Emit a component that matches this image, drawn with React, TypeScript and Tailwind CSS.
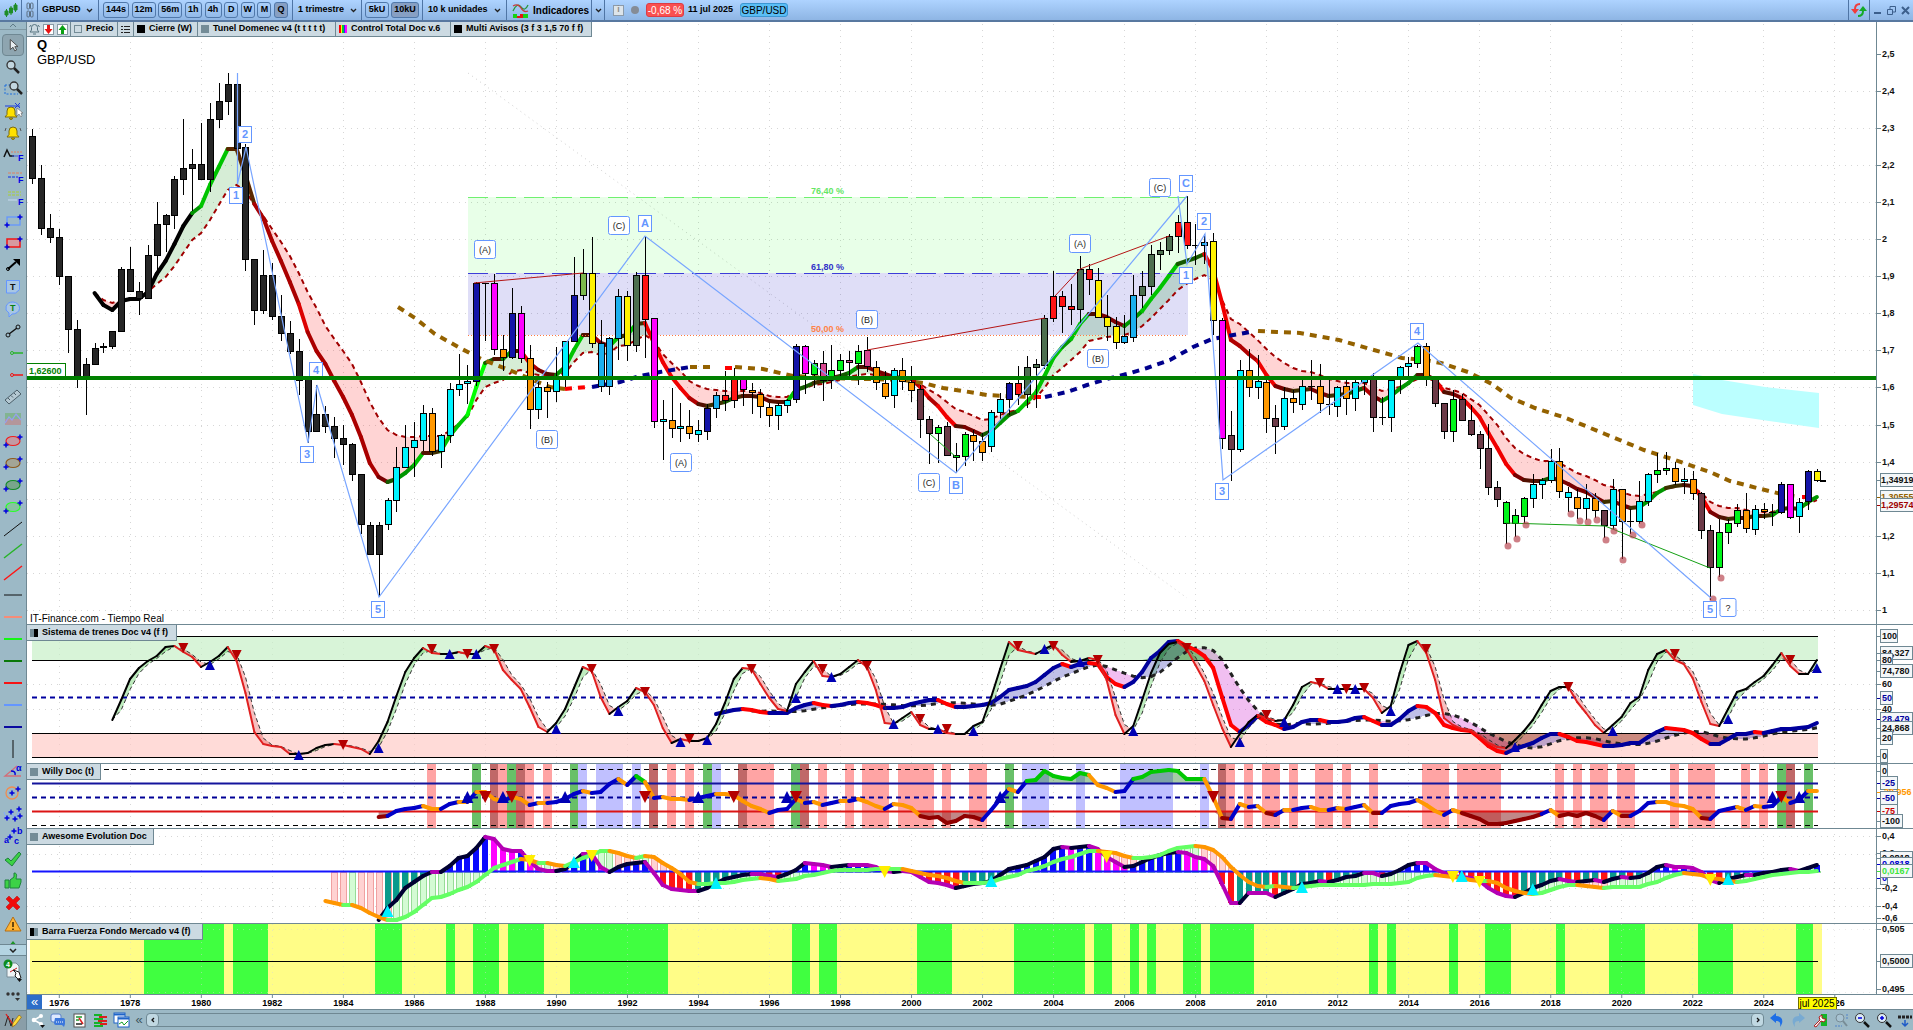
import React from "react";

type Tick = { y: number; text: string; color?: string; boxed?: boolean };
type Candle = [string, number, number, number, number];

const STEP = 8.878;
const barX = (i: number) => 32.4 + STEP * i;

const candleFill: Record<string, string> = {
  K: "#262626",
  C: "#00f4ff",
  O: "#ff9800",
  N: "#1414a8",
  M: "#ff00ff",
  G: "#00f51a",
  L: "#7db84c",
  D: "#4d6f50",
  R: "#ff1414",
  Y: "#fff200",
  B: "#1cb0ee",
  W: "#6c3a47",
  P: "#d8468f",
  X: "#000000",
};

// color, body top, body bottom, high, low
const candles: Candle[] = [
  ["K", 136, 179, 129, 184], ["K", 178, 229, 165, 235], ["K", 228, 238, 214, 243], ["K", 237, 277, 229, 285],
  ["K", 276, 330, 276, 353], ["K", 329, 377, 320, 388], ["K", 364, 377, 358, 415], ["K", 348, 365, 343, 365],
  ["K", 346, 348, 343, 353], ["K", 331, 347, 331, 349], ["K", 269, 332, 267, 332], ["K", 269, 292, 247, 292],
  ["K", 291, 299, 282, 315], ["K", 255, 299, 245, 299], ["K", 224, 256, 202, 274], ["K", 215, 225, 214, 252],
  ["K", 179, 216, 176, 229], ["K", 168, 180, 119, 195], ["K", 164, 169, 149, 211], ["K", 164, 180, 123, 180],
  ["K", 119, 180, 103, 192], ["K", 101, 120, 83, 128], ["K", 84, 102, 73, 115], ["K", 84, 149, 84, 149],
  ["K", 147, 260, 144, 271], ["K", 259, 311, 259, 325], ["K", 275, 311, 250, 314], ["K", 275, 317, 263, 320],
  ["K", 316, 334, 295, 341], ["K", 333, 352, 321, 354], ["K", 351, 381, 339, 395], ["K", 378, 432, 378, 443],
  ["K", 414, 432, 385, 432], ["K", 414, 427, 406, 433], ["K", 426, 439, 417, 458], ["K", 438, 445, 425, 465],
  ["K", 444, 475, 443, 481], ["K", 474, 525, 474, 534], ["K", 525, 555, 522, 555], ["K", 525, 555, 522, 597],
  ["C", 500, 525, 498, 530], ["C", 467, 501, 447, 512], ["C", 447, 468, 425, 468], ["C", 440, 448, 422, 477],
  ["C", 413, 441, 405, 451], ["O", 413, 452, 408, 456], ["C", 435, 452, 434, 468], ["C", 389, 436, 383, 443],
  ["C", 384, 390, 354, 396], ["C", 381, 384, 365, 404], ["N", 283, 382, 282, 386], ["X", 283, 284, 283, 341],
  ["M", 283, 350, 274, 355], ["O", 349, 358, 335, 371], ["N", 313, 358, 288, 359], ["M", 313, 359, 306, 363],
  ["O", 358, 410, 345, 429], ["C", 387, 410, 376, 419], ["O", 387, 392, 382, 418], ["C", 379, 392, 347, 402],
  ["C", 341, 379, 341, 387], ["N", 295, 342, 257, 342], ["L", 273, 296, 249, 300], ["Y", 273, 344, 237, 348],
  ["B", 343, 387, 320, 392], ["B", 338, 387, 337, 395], ["B", 296, 339, 289, 360], ["Y", 296, 346, 291, 361],
  ["D", 275, 346, 272, 352], ["R", 275, 320, 236, 358], ["M", 318, 422, 318, 428], ["C", 419, 422, 400, 460],
  ["O", 420, 429, 388, 438], ["C", 426, 429, 403, 442], ["O", 426, 434, 410, 439], ["C", 430, 435, 420, 442],
  ["N", 408, 432, 404, 440], ["B", 395, 409, 392, 418], ["R", 395, 401, 371, 411], ["R", 379, 401, 368, 408],
  ["M", 379, 390, 379, 406], ["O", 390, 393, 383, 414], ["O", 394, 407, 389, 418], ["O", 407, 416, 403, 427],
  ["C", 405, 416, 403, 430], ["C", 400, 406, 399, 413], ["N", 346, 400, 344, 403], ["M", 346, 374, 345, 394],
  ["G", 363, 375, 360, 388], ["P", 363, 381, 351, 401], ["G", 370, 381, 345, 389], ["G", 360, 371, 354, 380],
  ["P", 360, 363, 351, 378], ["G", 351, 364, 345, 385], ["P", 350, 367, 337, 372], ["O", 367, 383, 361, 390],
  ["O", 383, 397, 371, 399], ["C", 370, 396, 368, 408], ["O", 370, 382, 358, 390], ["O", 382, 391, 366, 402],
  ["W", 389, 420, 385, 438], ["W", 419, 434, 416, 464], ["G", 427, 434, 425, 463], ["W", 426, 456, 422, 456],
  ["G", 455, 458, 443, 473], ["G", 434, 457, 432, 466], ["O", 435, 442, 430, 461], ["O", 441, 453, 433, 461],
  ["C", 412, 447, 410, 452], ["C", 399, 413, 393, 420], ["N", 383, 400, 382, 415], ["R", 383, 395, 366, 405],
  ["D", 367, 395, 356, 408], ["D", 364, 368, 359, 408], ["D", 318, 366, 315, 369], ["R", 296, 319, 271, 322],
  ["R", 296, 307, 291, 333], ["R", 306, 310, 284, 325], ["D", 269, 310, 256, 324], ["R", 269, 280, 264, 295],
  ["Y", 280, 318, 268, 318], ["Y", 317, 327, 295, 341], ["Y", 326, 343, 317, 349], ["B", 336, 343, 315, 344],
  ["B", 295, 338, 275, 342], ["D", 286, 296, 271, 308], ["D", 254, 287, 245, 295], ["D", 250, 255, 242, 270],
  ["D", 236, 251, 234, 255], ["R", 222, 237, 215, 253], ["R", 222, 246, 196, 249], ["X", 245, 246, 224, 265],
  ["B", 242, 246, 234, 264], ["Y", 241, 321, 233, 335], ["M", 320, 439, 318, 449], ["W", 435, 450, 411, 481],
  ["C", 370, 450, 360, 452], ["O", 370, 388, 349, 397], ["C", 381, 388, 355, 399], ["O", 382, 419, 380, 433],
  ["W", 418, 427, 405, 454], ["C", 398, 427, 387, 430], ["O", 398, 403, 390, 413], ["C", 386, 405, 378, 410],
  ["X", 386, 387, 360, 400], ["O", 386, 404, 364, 413], ["X", 404, 405, 380, 415], ["C", 387, 407, 386, 417],
  ["O", 386, 399, 379, 415], ["C", 382, 399, 380, 411], ["C", 379, 383, 377, 395], ["W", 378, 418, 373, 432],
  ["X", 417, 418, 397, 425], ["C", 380, 418, 378, 432], ["C", 367, 380, 366, 394], ["C", 363, 367, 357, 376],
  ["G", 346, 364, 345, 368], ["O", 346, 377, 343, 386], ["W", 379, 404, 378, 407], ["W", 403, 432, 403, 439],
  ["G", 399, 432, 390, 442], ["W", 399, 421, 394, 421], ["W", 420, 435, 405, 436], ["W", 434, 449, 431, 469],
  ["W", 448, 488, 424, 495], ["W", 487, 500, 481, 507], ["G", 502, 524, 501, 544], ["G", 515, 524, 509, 537],
  ["G", 498, 517, 497, 524], ["C", 484, 499, 474, 508], ["C", 480, 485, 478, 499], ["C", 461, 481, 449, 483],
  ["O", 461, 492, 448, 498], ["C", 492, 498, 487, 512], ["O", 497, 509, 489, 519], ["C", 498, 509, 484, 520],
  ["O", 498, 511, 493, 518], ["W", 510, 526, 510, 538], ["C", 489, 526, 479, 529], ["O", 489, 522, 489, 559],
  ["X", 521, 522, 509, 534], ["C", 501, 522, 481, 524], ["C", 474, 502, 473, 506], ["G", 470, 475, 453, 483],
  ["G", 468, 471, 452, 475], ["O", 468, 482, 462, 485], ["C", 479, 482, 468, 494], ["O", 479, 494, 471, 500],
  ["W", 493, 531, 492, 539], ["W", 530, 568, 525, 600], ["G", 532, 568, 519, 577], ["G", 523, 533, 519, 544],
  ["G", 510, 524, 504, 527], ["O", 510, 529, 493, 533], ["C", 509, 530, 505, 535], ["O", 509, 512, 503, 519],
  ["X", 512, 513, 504, 526], ["N", 484, 513, 482, 514], ["M", 484, 518, 484, 519], ["C", 502, 517, 498, 533],
  ["N", 471, 502, 470, 510], ["Y", 471, 481, 469, 482],
];

// tunnel, first value on bar 7
const tunnelFast = [
  293, 305, 310, 301, 299, 299, 292, 274, 261, 244, 226, 213, 206, 185, 167, 149, 149, 175, 204, 218, 241, 261, 282,
  304, 332, 351, 364, 381, 397, 415, 437, 463, 477, 482, 479, 473, 465, 453, 453, 451, 436, 425, 415, 387, 363, 359,
  359, 351, 351, 363, 370, 374, 375, 367, 350, 335, 335, 343, 346, 337, 335, 324, 323, 343, 362, 377, 388, 398, 404,
  406, 404, 402, 398, 396, 396, 397, 401, 402, 402, 390, 387, 383, 381, 378, 376, 373, 367, 367, 371, 374, 377, 378,
  379, 387, 398, 406, 417, 426, 427, 431, 435, 431, 423, 415, 411, 402, 393, 376, 358, 347, 339, 324, 314, 314, 317,
  322, 326, 319, 311, 299, 288, 276, 264, 261, 258, 254, 270, 303, 340, 346, 354, 361, 375, 386, 389, 391, 390, 389,
  393, 396, 395, 394, 391, 388, 396, 401, 396, 389, 383, 375, 375, 380, 392, 394, 398, 407, 417, 433, 448, 464, 475,
  480, 481, 481, 478, 480, 484, 489, 492, 497, 502, 501, 505, 508, 507, 501, 493, 488, 486, 485, 486, 497, 512, 517,
  519, 518, 518, 516, 516, 515, 509, 508, 509, 502, 497,
];
const tunnelSlow = [
  293, 300, 303, 300, 299, 297, 292, 284, 277, 266, 253, 240, 233, 220, 205, 190, 185, 191, 205, 216, 229, 242, 256,
  273, 292, 308, 326, 339, 351, 364, 382, 402, 418, 430, 435, 437, 437, 436, 436, 436, 431, 424, 417, 400, 387, 383,
  380, 372, 370, 373, 375, 375, 375, 373, 362, 353, 352, 355, 353, 346, 345, 340, 335, 341, 354, 363, 371, 381, 386,
  389, 390, 391, 391, 391, 391, 393, 396, 397, 397, 390, 388, 385, 384, 382, 380, 377, 375, 374, 375, 376, 378, 379,
  379, 384, 390, 395, 402, 409, 412, 416, 420, 419, 415, 412, 410, 405, 398, 388, 375, 368, 360, 352, 341, 339, 337,
  336, 335, 332, 326, 318, 309, 300, 290, 284, 279, 275, 280, 300, 319, 324, 332, 340, 349, 357, 363, 368, 371, 372,
  375, 379, 381, 383, 383, 383, 387, 391, 389, 387, 383, 379, 378, 381, 388, 390, 393, 399, 405, 415, 425, 438, 448,
  454, 458, 461, 461, 463, 468, 473, 476, 480, 485, 487, 492, 495, 496, 494, 492, 489, 487, 485, 487, 493, 502, 506,
  508, 508, 510, 511, 512, 512, 509, 509, 508, 504, 500,
];

// first value on bar 9
const trainFast = [
  720, 700, 679, 668, 661, 656, 647, 646, 652, 657, 667, 662, 656, 647, 661, 693, 732, 744, 746, 747, 754, 754, 753,
  748, 745, 744, 745, 747, 749, 754, 741, 722, 696, 672, 658, 648, 653, 654, 654, 652, 654, 654, 646, 649, 670, 680,
  689, 707, 727, 732, 723, 709, 688, 667, 671, 697, 714, 707, 701, 688, 692, 705, 728, 743, 739, 741, 741, 738, 724,
  703, 679, 668, 669, 684, 698, 709, 711, 684, 672, 661, 676, 677, 674, 667, 660, 667, 690, 723, 724, 718, 712, 725,
  729, 729, 733, 734, 734, 726, 722, 697, 669, 642, 650, 652, 654, 649, 645, 655, 662, 661, 658, 660, 680, 715, 734,
  726, 700, 673, 653, 644, 642, 649, 665, 681, 705, 728, 747, 734, 722, 715, 718, 721, 720, 705, 687, 682, 684, 689,
  689, 689, 689, 689, 698, 713, 706, 673, 645, 641, 653, 680, 718, 725, 729, 730, 736, 743, 747, 748, 740, 731, 720,
  705, 691, 687, 687, 702, 713, 725, 733, 725, 717, 703, 697, 670, 654, 650, 660, 664, 678, 702, 724, 726, 709, 692,
  689, 682, 676, 665, 653, 666, 674, 674, 660,
];
// first value on bar 77
const trainSlow = [
  714, 712, 710, 709, 710, 712, 713, 713, 713, 708, 705, 703, 705, 706, 705, 703, 702, 703, 705, 708, 708, 707, 704,
  702, 700, 700, 704, 707, 707, 706, 705, 703, 697, 690, 688, 686, 682, 675, 668, 664, 667, 664, 663, 664, 677, 684,
  687, 682, 672, 658, 651, 642, 641, 646, 650, 656, 668, 697, 725, 732, 725, 716, 722, 725, 729, 727, 722, 720, 720,
  722, 722, 721, 718, 717, 721, 725, 725, 719, 711, 706, 707, 713, 725, 728, 730, 731, 738, 746, 751, 753, 749, 746,
  743, 738, 734, 734, 737, 741, 742, 744, 746, 746, 745, 743, 743, 737, 732, 728, 729, 730, 733, 739, 744, 744, 739,
  734, 734, 732, 733, 731, 729, 729, 728, 727, 723,
];
// first value on bar 39
const willy = [
  817, 816, 811, 809, 808, 806, 809, 809, 804, 802, 802, 792, 792, 799, 801, 797, 799, 805, 803, 803, 802, 799, 794,
  791, 793, 792, 784, 779, 785, 776, 782, 798, 797, 799, 799, 800, 798, 796, 794, 794, 795, 801, 806, 809, 813, 810,
  809, 799, 803, 802, 805, 803, 801, 801, 799, 802, 806, 809, 804, 805, 808, 816, 818, 817, 823, 821, 816, 817, 820,
  810, 799, 789, 792, 781, 780, 771, 776, 778, 779, 773, 775, 785, 788, 792, 791, 779, 777, 772, 771, 770, 771, 779,
  779, 779, 797, 818, 819, 804, 807, 806, 813, 815, 810, 810, 808, 807, 810, 810, 808, 809, 807, 805, 813, 813, 806,
  804, 803, 800, 805, 811, 815, 810, 813, 816, 819, 824, 824, 823, 821, 819, 817, 814, 810, 816, 814, 816, 813, 816,
  820, 811, 816, 816, 811, 803, 802, 802, 805, 806, 809, 818, 819, 811, 809, 807, 810, 806, 807, 806, 797, 803, 800,
  791, 791,
];
// first value on bar 39
const aoFast = [
  920, 908, 900, 888, 882, 876, 872, 872, 866, 858, 856, 848, 837, 839, 849, 851, 851, 861, 869, 871, 871, 869, 862,
  854, 854, 867, 872, 867, 864, 863, 862, 873, 885, 889, 890, 891, 891, 888, 883, 879, 877, 875, 874, 874, 876, 877,
  874, 870, 863, 864, 865, 867, 866, 865, 865, 865, 867, 871, 872, 871, 872, 877, 882, 883, 885, 888, 886, 884, 883,
  881, 875, 869, 867, 865, 861, 857, 849, 847, 848, 847, 846, 849, 857, 862, 867, 866, 862, 858, 855, 853, 852, 853,
  857, 859, 866, 884, 903, 903, 893, 893, 893, 897, 893, 889, 884, 883, 881, 882, 880, 877, 876, 873, 873, 876, 874,
  870, 865, 863, 863, 869, 873, 876, 877, 878, 881, 888, 893, 896, 897, 893, 888, 885, 881, 879, 881, 882, 881, 880,
  882, 879, 877, 878, 877, 873, 867, 865, 867, 867, 868, 872, 880, 883, 879, 877, 875, 875, 873, 872, 870, 869, 871,
  868, 865,
];
// first value on bar 33
const aoSlow = [
  901, 903, 905, 905, 908, 913, 917, 920, 920, 917, 912, 905, 898, 897, 894, 890, 887, 882, 875, 868, 865, 862, 859,
  860, 863, 863, 865, 866, 862, 858, 855, 851, 851, 853, 856, 858, 856, 857, 863, 868, 874, 882, 884, 884, 883, 883,
  882, 880, 879, 878, 879, 881, 880, 879, 876, 875, 873, 871, 870, 870, 870, 870, 869, 869, 869, 869, 871, 873, 875,
  876, 878, 881, 883, 883, 883, 882, 879, 877, 875, 871, 869, 866, 862, 859, 857, 854, 851, 851, 852, 853, 856, 858,
  858, 857, 855, 851, 848, 847, 846, 847, 850, 857, 867, 875, 882, 886, 887, 886, 887, 888, 887, 886, 885, 885, 885,
  885, 885, 885, 884, 884, 884, 883, 882, 878, 876, 875, 876, 877, 878, 880, 881, 881, 883, 888, 891, 893, 894, 893,
  890, 887, 885, 885, 886, 887, 888, 887, 887, 887, 887, 884, 882, 878, 875, 873, 874, 875, 878, 879, 881, 882, 881,
  879, 877, 875, 874, 873, 872, 872, 871,
];

const trainDown: [number, number][] = [
  [17, 648], [23, 655], [35, 745], [45, 649], [49, 654], [52, 649], [63, 669], [69, 692], [74, 739], [81, 669],
  [89, 669], [94, 666], [100, 719], [103, 729], [111, 646], [115, 646], [120, 660], [130, 648], [139, 715],
  [145, 683], [148, 689], [150, 688], [157, 649], [173, 687], [185, 654], [198, 660],
];
const trainUp: [number, number][] = [
  [20, 665], [30, 755], [39, 748], [47, 654], [50, 654], [59, 729], [66, 711], [73, 742], [76, 740], [86, 698],
  [90, 677], [97, 724], [102, 729], [106, 731], [114, 649], [118, 662], [124, 731], [136, 742], [141, 722],
  [147, 689], [149, 689], [153, 711], [167, 747], [178, 731], [191, 719], [201, 668],
];

const stripeFill: Record<string, string> = { p: "#ffa4a4", g: "#68c068", d: "#c06868", b: "#c0c0ff" };
const willyStripes: [string, number, number][] = [
  ["p", 45, 45], ["g", 50, 50], ["d", 52, 52], ["p", 53, 53], ["g", 54, 54], ["d", 55, 55], ["p", 56, 56],
  ["p", 58, 58], ["g", 61, 61], ["b", 62, 62], ["b", 64, 66], ["b", 68, 68], ["d", 70, 70], ["p", 72, 72],
  ["p", 74, 74], ["g", 76, 76], ["b", 77, 77], ["d", 80, 80], ["p", 81, 83], ["g", 86, 86], ["d", 87, 87],
  ["p", 89, 89], ["p", 92, 92], ["p", 94, 96], ["p", 98, 101], ["p", 103, 103], ["p", 106, 107], ["g", 110, 110],
  ["b", 112, 114], ["b", 118, 118], ["b", 123, 128], ["b", 132, 132], ["d", 134, 134], ["p", 135, 135],
  ["p", 137, 137], ["p", 139, 140], ["p", 142, 142], ["p", 145, 146], ["p", 148, 148], ["p", 151, 151],
  ["p", 157, 159], ["p", 161, 165], ["p", 172, 172], ["p", 174, 174], ["p", 176, 177], ["p", 179, 180],
  ["p", 185, 185], ["p", 187, 189], ["p", 193, 193], ["p", 195, 195], ["g", 197, 197], ["d", 198, 198],
  ["g", 200, 200],
];

const forceStripes: [number, number][] = [
  [144, 224], [233, 268], [375, 402], [446, 455], [473, 499], [508, 544], [570, 668], [792, 810], [819, 837],
  [917, 952], [1014, 1085], [1094, 1112], [1130, 1139], [1147, 1156], [1183, 1201], [1210, 1254], [1369, 1378],
  [1387, 1396], [1449, 1458], [1485, 1511], [1556, 1565], [1609, 1645], [1698, 1733], [1796, 1813],
];

const waveBoxes: [string, number, number][] = [
  ["2", 245, 135], ["1", 236, 196], ["4", 316, 371], ["3", 307, 455], ["5", 378, 610], ["A", 645, 224],
  ["C", 1186, 184], ["2", 1204, 222], ["1", 1186, 276], ["B", 956, 486], ["3", 1222, 492], ["4", 1417, 332],
  ["5", 1710, 610],
];
const subWaves: [string, number, number][] = [
  ["(A)", 485, 250], ["(C)", 619, 226], ["(B)", 547, 440], ["(A)", 681, 463], ["(B)", 867, 320], ["(C)", 929, 483],
  ["(A)", 1080, 244], ["(B)", 1098, 359], ["(C)", 1160, 188], ["?", 1728, 608],
];
const lowDots: [number, number][] = [
  [1508, 546], [1517, 539], [1526, 525], [1571, 514], [1580, 521], [1588, 522], [1597, 520], [1606, 540],
  [1614, 531], [1623, 560], [1633, 535], [1642, 525], [1713, 599], [1721, 578],
];

const longAverage: [string, string][] = [
  ["#946200", "398,307 415,318 435,334 460,348 483,360 507,369 533,380 550,387 565,389"],
  ["#ff0000", "565,389 587,387"],
  ["#00008c", "592,387 620,382 640,376 660,372 690,367"],
  ["#946200", "690,367 713,367"],
  ["#ff0000", "725,368 733,368"],
  ["#946200", "735,367 763,369 793,376 830,378 904,380 923,383 943,388 963,391 987,395 1007,396 1033,397"],
  ["#ff0000", "1034,397 1045,397"],
  ["#00008c", "1045,397 1067,392 1087,385 1107,379 1127,374 1147,368 1170,360 1193,347 1212,339 1250,332"],
  [
    "#946200",
    "1258,331 1277,332 1300,333 1339,340 1374,350 1402,358 1425,360 1441,363 1468,372 1492,384 1511,398 1535,408 1566,418 1605,434 1644,450 1675,460 1710,472 1730,481 1757,488 1781,494 1800,497",
  ],
  ["#ff0000", "1802,497 1814,497"],
];

const years = Array.from({ length: 26 }, (_, k) => 1976 + k * 2);
const yearX = (year: number) => 59.3 + ((year - 1976) / 2) * 71.02;

const points = (ys: number[], start: number) => ys.map((y, k) => `${barX(start + k).toFixed(1)},${y}`).join(" ");

const average = (ys: number[], n: number) =>
  ys.map((_, k) => {
    const part = ys.slice(Math.max(0, k - n + 1), k + 1);
    return part.reduce((a, b) => a + b, 0) / part.length;
  });

function tunnelColor(delta: number, bar: number) {
  if (bar < 18) return "#000000";
  const d = Math.abs(delta);
  if (delta < 0) {
    if (d >= 23) return "#00ff00";
    if (d >= 9) return "#00c400";
    if (d >= 5) return "#009600";
    return d >= 3 ? "#145a00" : "#3f3000";
  }
  if (bar < 41) {
    if (bar < 25) return "#5a2800";
    return d >= 27 ? "#dc0000" : d >= 12 ? "#aa0000" : "#7a0000";
  }
  if (d >= 9) return "#f00000";
  if (d >= 6) return "#b00000";
  return d >= 3 ? "#7a0000" : "#521000";
}

function willyColor(a: number, b: number) {
  if (a < 783 && b < 784) return "#00c800";
  if (a > 811 && b > 811) return "#900000";
  return b < a ? "#0000c8" : "#ff9800";
}

interface SegmentsProps {
  ys: number[];
  start: number;
  width: number;
  color: (a: number, b: number, bar: number) => string;
}

function Segments({ ys, start, width, color }: SegmentsProps) {
  return (
    <g strokeWidth={width} strokeLinecap="round">
      {ys.slice(1).map((y, k) => (
        <line
          key={k}
          x1={barX(start + k)}
          y1={ys[k]}
          x2={barX(start + k + 1)}
          y2={y}
          stroke={color(ys[k], y, start + k)}
        />
      ))}
    </g>
  );
}

interface BetweenProps {
  a: number[];
  b: number[];
  start: number;
  above: string;
  below: string;
}

function Between({ a, b, start, above, below }: BetweenProps) {
  return (
    <g shapeRendering="crispEdges">
      {a.slice(1).map((_, k) => (
        <polygon
          key={k}
          points={`${barX(start + k)},${a[k]} ${barX(start + k + 1)},${a[k + 1]} ${barX(start + k + 1)},${b[k + 1]} ${barX(start + k)},${b[k]}`}
          fill={a[k] + a[k + 1] < b[k] + b[k + 1] ? above : below}
        />
      ))}
    </g>
  );
}

interface BeyondProps {
  ys: number[];
  start: number;
  limit: number;
  side: 1 | -1;
  fill: string;
}

function Beyond({ ys, start, limit, side, fill }: BeyondProps) {
  const clipped = ys.map((y) => (side === 1 ? Math.max(y, limit) : Math.min(y, limit)));
  const last = barX(start + ys.length - 1);
  return <polygon points={`${barX(start)},${limit} ${points(clipped, start)} ${last},${limit}`} fill={fill} />;
}

function Arrow({ bar, y, up, color, size = 5 }: { bar: number; y: number; up: boolean; color: string; size?: number }) {
  const x = barX(bar);
  const s = up ? size : -size;
  return <polygon points={`${x - size},${y + s} ${x + size},${y + s} ${x},${y - s}`} fill={color} />;
}

function Grid({ rows }: { rows: number[] }) {
  return (
    <g stroke="#d6d6d6" strokeDasharray="1 5" shapeRendering="crispEdges">
      {years.map((year) => (
        <line key={year} x1={yearX(year)} x2={yearX(year)} y1={0} y2={1030} />
      ))}
      {rows.map((y) => (
        <line key={y} x1={27} x2={4000} y1={y} y2={y} />
      ))}
    </g>
  );
}

interface PaneProps {
  className: string;
  top: number;
  ticks: Tick[];
  label: string;
  header?: React.ReactNode;
  children: React.ReactNode;
}

function Pane({ className, top, ticks, label, header, children }: PaneProps) {
  return (
    <section className={`relative flex border-b border-[#6f8893] bg-white ${className}`} aria-label={label}>
      <svg className="h-full min-w-0 flex-1" role="img" aria-label={label}>
        <g transform={`translate(-27 ${-top})`}>{children}</g>
      </svg>
      <svg className="h-full w-[37px] shrink-0 border-l border-[#6f8893]">
        <g transform={`translate(0 ${-top})`} fontSize="9" fontWeight="bold">
          {ticks.map((t) => (
            <g key={`${t.text}${t.y}`}>
              <line x1={0} x2={4} y1={t.y + 0.5} y2={t.y + 0.5} stroke={t.color ?? "#6f8893"} />
              {t.boxed && (
                <rect
                  x={3.5}
                  y={t.y - 6.5}
                  width={t.text.length * 5 + 2}
                  height={13}
                  fill="#f4f7f9"
                  stroke="#6f8893"
                />
              )}
              <text x={t.text.length > 6 ? 4 : 5} y={t.y + 3} fill={t.color ?? "#111"}>
                {t.text}
              </text>
            </g>
          ))}
        </g>
      </svg>
      {header && <div className="absolute top-0 left-0">{header}</div>}
    </section>
  );
}

function PaneTitle({ text, width, split }: { text: string; width: string; split?: "left" | "right" }) {
  return (
    <h2
      className={`flex h-4 items-center gap-1 border-r border-b border-[#6f8893] bg-[#ccdae2] pl-[3px] text-[9px] font-bold whitespace-nowrap ${width}`}
    >
      <span className="flex h-2 w-2 shrink-0 bg-[#748c97]">
        {split === "left" && <span className="h-2 w-1 bg-black" />}
        {split === "right" && <span className="ml-1 h-2 w-1 bg-black" />}
      </span>
      {text}
    </h2>
  );
}

const priceTicks: Tick[] = [
  ...Array.from({ length: 16 }, (_, k) => 25 - k)
    .filter((v) => v !== 13)
    .map((v) => ({
      y: Math.round(90.8 + (24 - v) * 37.08),
      text: v % 10 === 0 ? `${v / 10}` : `${v / 10}`.replace(".", ","),
    })),
  { y: 480, text: "1,34919", boxed: true },
  { y: 497, text: "1,30555", color: "#946200", boxed: true },
  { y: 505, text: "1,29574", color: "#a00000", boxed: true },
];

const legend = [
  { text: "Precio", width: "w-[47px]", swatch: "border border-[#748c97]" },
  { text: "", width: "w-4", swatch: "" },
  { text: "Cierre (W)", width: "w-16", swatch: "bg-black" },
  { text: "Tunel Domenec v4 (t t t t t)", width: "w-[138px]", swatch: "bg-[#748c97]" },
  {
    text: "Control Total Doc v.6",
    width: "w-[115px]",
    swatch: "bg-[linear-gradient(90deg,#ff0000_0_2px,#ffff00_2px_3px,#00c83c_3px_5px,#2828ff_5px_6px,#ff00ff_6px_8px)]",
  },
  { text: "Multi Avisos (3 f 3 1,5 70 f f)", width: "w-[141px]", swatch: "bg-black" },
];

function PriceLegend() {
  return (
    <div className="flex h-[15px] items-stretch border-b border-[#6f8893] bg-[#ccdae2] text-[9px] font-bold whitespace-nowrap">
      <div className="flex w-[44px] items-center justify-around border-r border-[#6f8893]">
        <button aria-label="Alertas">
          <svg width="11" height="11" viewBox="0 0 11 11" fill="none" stroke="#55727f">
            <path d="M1 8h9L8.500 6V3.500a3 3 0 0 0-6 0V6zM4 10h3M.5 3 2 1M10.500 3 9 1" />
          </svg>
        </button>
        <button aria-label="Vender">
          <svg width="11" height="11" viewBox="0 0 11 11">
            <rect x=".5" y=".5" width="10" height="10" fill="#fff" stroke="#889ba5" />
            <path d="M4 1h3v4h2.500l-4 5-4-5H4z" fill="#e61414" />
          </svg>
        </button>
        <button aria-label="Comprar">
          <svg width="11" height="11" viewBox="0 0 11 11">
            <rect x=".5" y=".5" width="10" height="10" fill="#fff" stroke="#889ba5" />
            <path d="M4 10h3V6h2.500l-4-5-4 5H4z" fill="#0aa014" />
          </svg>
        </button>
      </div>
      {legend.map((item) => (
        <button
          key={item.text || "lista"}
          aria-label={item.text || "Lista"}
          className={`flex items-center gap-1 border-r border-[#6f8893] pl-[3px] ${item.width}`}
        >
          {item.text ? (
            <>
              <span className={`h-2 w-2 shrink-0 ${item.swatch}`} />
              {item.text}
            </>
          ) : (
            <svg width="9" height="9" viewBox="0 0 9 9" stroke="#222">
              <path d="M0 1.500h2M3 1.500h6M0 4.500h2M3 4.500h6M0 7.500h2M3 7.500h6" />
            </svg>
          )}
        </button>
      ))}
    </div>
  );
}

function PricePane() {
  const rows = priceTicks.filter((t) => !t.boxed).map((t) => t.y);
  return (
    <Pane className="min-h-0 flex-1" top={22} label="GBP/USD" ticks={priceTicks} header={<PriceLegend />}>
      <Grid rows={[...rows.slice(1), 499]} />
      <line x1={468} y1={73} x2={1187} y2={598} stroke="#cfcfcf" strokeDasharray="1 4" />
      <rect x={468} y={197} width={720} height={76} fill="#00ff00" fillOpacity={0.09} />
      <rect x={468} y={273} width={720} height={62} fill="#1e14c8" fillOpacity={0.14} />
      <polygon points="1693,374 1722,380 1765,387 1819,393 1819,428 1769,421 1722,414 1693,405" fill="#bbffff" />

      <Between a={tunnelFast} b={tunnelSlow} start={7} above="rgba(0,140,0,0.16)" below="rgba(255,0,0,0.17)" />
      <polyline points={points(tunnelSlow, 7)} fill="none" stroke="#a00000" strokeWidth={2} strokeDasharray="5 4" />
      <Segments ys={tunnelFast} start={7} width={4} color={(a, b, bar) => tunnelColor(b - a, bar)} />
      {longAverage.map(([color, pts]) => (
        <polyline key={pts} points={pts} fill="none" stroke={color} strokeWidth={4} strokeDasharray="7 6" />
      ))}

      <g strokeDasharray="20 8" shapeRendering="crispEdges">
        <line x1={468} x2={1188} y1={197} y2={197} stroke="#70f070" />
        <line x1={468} x2={1188} y1={273} y2={273} stroke="#3c3cd8" />
      </g>
      <line x1={468} x2={1188} y1={335.5} y2={335.5} stroke="#ff7840" strokeDasharray="1 2" />

      <g shapeRendering="crispEdges">
        {candles.map(([color, top, bottom, high, low], i) => {
          const x = Math.round(barX(i));
          return (
            <g key={i}>
              <rect x={x} y={high} width={1} height={low - high} fill="#000" />
              <rect x={x - 3} y={top} width={7} height={Math.max(bottom - top, 1)} fill="#000" />
              {bottom - top > 2 && (
                <rect x={x - 2} y={top + 1} width={5} height={bottom - top - 2} fill={candleFill[color]} />
              )}
            </g>
          );
        })}
        <rect x={1820} y={480} width={6} height={2} fill="#000" />
      </g>

      <g fill="none" stroke="#b41414">
        <path d="M474 283L583 273M867 350L1045 318M1055 296L1080 269L1169 236" />
        <path d="M930 434L956 457M1506 523L1605 526L1710 568" stroke="#14a014" />
      </g>
      <g fill="#b43c46" fillOpacity={0.65}>
        {lowDots.map(([x, y]) => (
          <circle key={x} cx={x} cy={y} r={3.5} />
        ))}
      </g>
      <g fill="none" stroke="#78a5ff" strokeWidth={1.2}>
        <path d="M237.500 73V184L246 147L308 443L317 385L379 597L645 236L956 473L1187 196" />
        <path d="M1178 196L1187 264L1205 234L1223 480L1418 343L1711 598" />
      </g>

      <g textAnchor="middle">
        {waveBoxes.map(([text, x, y]) => (
          <g key={`${text}${x}`}>
            <rect x={x - 6.5} y={y - 8.5} width={13} height={16} fill="#fff" stroke="#6496ff" />
            <text x={x} y={y + 3} fill="#6496ff" fontSize="11" fontWeight="bold">
              {text}
            </text>
          </g>
        ))}
        {subWaves.map(([text, x, y]) => {
          const half = text === "?" ? 8 : 10.5;
          return (
            <g key={`${text}${x}`}>
              <rect x={x - half} y={y - 9.5} width={half * 2} height={18} rx={2} fill="#fff" stroke="#6496ff" />
              <text x={x} y={y + 3} fill="#222" fontSize="9">
                {text}
              </text>
            </g>
          );
        })}
      </g>

      <rect x={27} y={376} width={4000} height={4} fill="#008000" />
      <rect x={26.5} y={363.5} width={39} height={13} fill="#fff" stroke="#008000" />
      <text x={29} y={374} fill="#008000" fontSize="9" fontWeight="bold">
        1,62600
      </text>

      <g fontSize="9" fontWeight="bold">
        <text x={811} y={194} fill="#64e664">76,40 %</text>
        <text x={811} y={270} fill="#3232c8">61,80 %</text>
        <text x={811} y={332} fill="#ff8246">50,00 %</text>
      </g>
      <text x={37} y={49} fontSize="13" fontWeight="bold">Q</text>
      <text x={37} y={64} fontSize="13">GBP/USD</text>
      <text x={30} y={622} fontSize="10">IT-Finance.com - Tiempo Real</text>
    </Pane>
  );
}

function TrainsPane() {
  const fastSignal = average(trainFast, 2);
  const slowSignal = average(trainSlow, 6);
  return (
    <Pane
      className="h-[139px] shrink-0"
      top={625}
      label="Sistema de trenes Doc v4 (f f)"
      header={<PaneTitle text="Sistema de trenes Doc v4 (f f)" width="w-[150px]" split="right" />}
      ticks={[
        { y: 653, text: "84,327", boxed: true },
        { y: 636, text: "100", boxed: true },
        { y: 660, text: "80", boxed: true },
        { y: 671, text: "74,780", boxed: true },
        { y: 684, text: "60" },
        { y: 709, text: "40" },
        { y: 698, text: "50", color: "#0000a0", boxed: true },
        { y: 719, text: "28,479", color: "#0000a0", boxed: true },
        { y: 728, text: "24,868", boxed: true },
        { y: 738, text: "20", boxed: true },
        { y: 756, text: "0", boxed: true },
      ]}
    >
      <Grid rows={[684, 709]} />
      <rect x={32} y={636} width={1786} height={24} fill="#c8f0c8" fillOpacity={0.7} />
      <rect x={32} y={733} width={1786} height={24} fill="#ffc8c3" fillOpacity={0.65} />
      <Between a={trainFast} b={fastSignal} start={9} above="rgba(0,180,0,0.25)" below="rgba(220,0,0,0.25)" />
      <Between a={trainSlow} b={slowSignal} start={77} above="rgba(0,0,160,0.25)" below="rgba(200,0,200,0.25)" />
      <Beyond ys={trainSlow} start={77} limit={733} side={1} fill="rgba(140,40,20,0.45)" />
      <Beyond ys={trainSlow} start={77} limit={660} side={-1} fill="rgba(0,100,0,0.4)" />
      <path d="M32 636.500H1818M32 660.500H1818M32 733.500H1818M32 757.500H1818" stroke="#000" shapeRendering="crispEdges" />
      <line x1={32} x2={1818} y1={697.5} y2={697.5} stroke="#0000a0" strokeWidth={2} strokeDasharray="5 4" />
      <polyline points={points(slowSignal.slice(4), 81)} fill="none" stroke="#222" strokeWidth={3} strokeDasharray="5 5" />
      <Segments ys={trainSlow} start={77} width={4} color={(a, b) => (b <= a ? "#00009c" : "#ff0000")} />
      <polyline points={points(fastSignal, 9)} fill="none" stroke="#333" strokeDasharray="4 3" />
      <Segments ys={trainFast} start={9} width={2} color={(a, b) => (b <= a ? "#000000" : "#e02020")} />
      {trainDown.map(([bar, y]) => (
        <Arrow key={bar} bar={bar} y={y} up={false} color="#b40000" />
      ))}
      {trainUp.map(([bar, y]) => (
        <Arrow key={bar} bar={bar} y={y} up color="#0000b4" />
      ))}
    </Pane>
  );
}

function WillyPane() {
  return (
    <Pane
      className="h-[65px] shrink-0"
      top={764}
      label="Willy Doc (t)"
      header={<PaneTitle text="Willy Doc (t)" width="w-[74px]" />}
      ticks={[
        { y: 771, text: "0", boxed: true },
        { y: 783, text: "-25", color: "#0000a0", boxed: true },
        { y: 792, text: "-39,956", color: "#ff9800" },
        { y: 798, text: "-50", color: "#0000a0", boxed: true },
        { y: 811, text: "-75", color: "#c80000", boxed: true },
        { y: 821, text: "-100", boxed: true },
      ]}
    >
      <Grid rows={[]} />
      {willyStripes.map(([kind, from, to]) => (
        <rect
          key={from}
          x={Math.round(barX(from) - STEP / 2)}
          y={764}
          width={Math.round((to - from + 1) * STEP)}
          height={65}
          fill={stripeFill[kind]}
        />
      ))}
      <path d="M32 769.500H1818M32 825.500H1818" stroke="#000" strokeDasharray="5 4" />
      <line x1={32} x2={1818} y1={797.5} y2={797.5} stroke="#000096" strokeWidth={2} strokeDasharray="5 4" />
      <Beyond ys={willy} start={39} limit={783} side={-1} fill="rgba(0,110,0,0.35)" />
      <Beyond ys={willy} start={39} limit={811} side={1} fill="rgba(130,20,20,0.5)" />
      <path d="M32 783.500H1818" stroke="#14149c" strokeWidth={2} />
      <path d="M32 811.500H1818" stroke="#dc1414" strokeWidth={2} />
      <Segments ys={willy} start={39} width={4} color={willyColor} />
      {[49, 53, 60, 75, 85, 109, 196, 199].map((bar) => (
        <Arrow key={bar} bar={bar} y={797} up color="#0000b4" size={6} />
      ))}
      {[51, 54, 69, 79, 86, 133, 197].map((bar) => (
        <Arrow key={bar} bar={bar} y={797} up={false} color="#b40000" size={6} />
      ))}
    </Pane>
  );
}

function AwesomePane() {
  const zero = 872;
  return (
    <Pane
      className="h-[95px] shrink-0"
      top={829}
      label="Awesome Evolution Doc"
      header={<PaneTitle text="Awesome Evolution Doc" width="w-[127px]" />}
      ticks={[
        { y: 836, text: "0,4" },
        { y: 853, text: "0,2" },
        { y: 858, text: "0,0818", boxed: true },
        { y: 864, text: "0,0818", color: "#0000d0", boxed: true },
        { y: 878, text: "0", color: "#0000d0", boxed: true },
        { y: 871, text: "0,0167", color: "#3ce63c", boxed: true },
        { y: 888, text: "-0,2" },
        { y: 906, text: "-0,4" },
        { y: 918, text: "-0,6" },
      ]}
    >
      <Grid rows={[836, 854, 888, 906]} />
      <g shapeRendering="crispEdges">
        {aoSlow.slice(1).map((y, k) => (
          <rect
            key={k}
            x={Math.round(barX(34 + k)) - 3}
            y={Math.min(y, zero)}
            width={6}
            height={Math.abs(y - zero)}
            fill={y <= aoSlow[k] ? "#d4fbd4" : "#ffd2d2"}
            stroke={y <= aoSlow[k] ? "#96dc96" : "#f0a0a0"}
          />
        ))}
        {aoFast.slice(1).map((y, k) => {
          const rising = y <= aoFast[k];
          const fill = y < zero ? (rising ? "#0a0aff" : "#ff00ff") : rising ? "#0a9a8c" : "#ff1414";
          return (
            <rect
              key={k}
              x={Math.round(barX(40 + k)) - 3}
              y={Math.min(y, zero)}
              width={6}
              height={Math.abs(y - zero)}
              fill={fill}
            />
          );
        })}
      </g>
      <line x1={32} x2={1818} y1={871.5} y2={871.5} stroke="#1414ff" strokeWidth={2} />
      <Segments ys={aoFast} start={39} width={4} color={(a, b) => (b < a ? "#000032" : "#b400b4")} />
      <Segments ys={aoSlow} start={33} width={4} color={(a, b) => (b <= a ? "#64ff64" : "#ff9600")} />
      {[[40, 911], [61, 862], [77, 883], [108, 881], [143, 887], [161, 876], [169, 889], [191, 879]].map(([bar, y]) => (
        <Arrow key={bar} bar={bar} y={y} up color="#00f0ff" size={6} />
      ))}
      {[[56, 861], [63, 856], [96, 872], [121, 857], [160, 877], [163, 882], [189, 880]].map(([bar, y]) => (
        <Arrow key={bar} bar={bar} y={y} up={false} color="#ffee00" size={6} />
      ))}
    </Pane>
  );
}

function ForcePane() {
  return (
    <Pane
      className="h-[71px] shrink-0"
      top={924}
      label="Barra Fuerza Fondo Mercado v4 (f)"
      header={<PaneTitle text="Barra Fuerza Fondo Mercado v4 (f)" width="w-44" split="left" />}
      ticks={[
        { y: 929, text: "0,505" },
        { y: 961, text: "0,5000", boxed: true },
        { y: 989, text: "0,495" },
      ]}
    >
      <g shapeRendering="crispEdges">
        <rect x={30} y={924} width={1792} height={71} fill="#fffd87" />
        {forceStripes.map(([from, to]) => (
          <rect key={from} x={from} y={924} width={to - from} height={71} fill="#40ff40" />
        ))}
        <rect x={32} y={961} width={1786} height={1} fill="#000" />
      </g>
      <g opacity={0.5}>
        <Grid rows={[929, 992]} />
      </g>
    </Pane>
  );
}

function TimeAxis() {
  return (
    <div className="flex h-[15px] shrink-0 border-b border-[#6f8893] bg-white">
      <button className="w-[15px] shrink-0 bg-[#2d6ec8] text-[13px] leading-3 text-white" aria-label="Retroceder">
        «
      </button>
      <svg className="h-full min-w-0 flex-1" fontSize="9" fontWeight="bold" textAnchor="middle">
        <g transform="translate(-42 0)">
          {years.map((year) => (
            <g key={year}>
              <line x1={yearX(year)} x2={yearX(year)} y1={0} y2={3} stroke="#6f8893" />
              <text x={yearX(year)} y={11}>
                {year}
              </text>
            </g>
          ))}
          <rect x={1798.5} y={2.5} width={38} height={12} fill="#ffff00" stroke="#6f6f00" />
          <text x={1817} y={12} fontSize="10" fontWeight="normal">
            jul 2025
          </text>
        </g>
      </svg>
    </div>
  );
}

const cross = (x: number, y: number) => (
  <path d={`M${x - 2.5} ${y}h5M${x} ${y - 2.5}v5`} stroke="#0000dc" strokeWidth="1.5" />
);

const ellipse = (stroke: string, fill: string) => (
  <>
    <ellipse cx="11" cy="11" rx="7" ry="4.5" fill={fill} stroke={stroke} strokeWidth="1.2" />
    {cross(4, 15)}
    {cross(18, 7)}
  </>
);
const diagonal = (stroke: string, width = 1.5) => <path d="M2 18L20 4" stroke={stroke} strokeWidth={width} />;
const level = (stroke: string, width = 2) => <path d="M2 11h18" stroke={stroke} strokeWidth={width} />;
const ray = (stroke: string) => (
  <>
    <path d="M11 11h10" stroke={stroke} strokeWidth="1.5" />
    <circle cx="10" cy="11" r="1.5" fill="none" stroke={stroke} />
  </>
);
const lens = (
  <>
    <circle cx="9" cy="9" r="4" fill="#c2d6df" stroke="#333" strokeWidth="1.3" />
    <path d="M12 12l5 5" stroke="#222" strokeWidth="2.5" />
  </>
);
const bell = (
  <path d="M5 15h12l-2-2.500V9a4 4 0 0 0-8 0v3.500zM9.500 16a1.500 1.500 0 0 0 3 0z" fill="#ffe100" stroke="#7a6a14" />
);
const letter = (text: string, x: number, y: number, color: string) => (
  <text x={x} y={y} fill={color} fontSize="9" fontWeight="bold">
    {text}
  </text>
);

const tools: [string, React.ReactNode][] = [
  ["Cursor", <path d="M8 5v11l3-2.500 2 4 2-1-2-3.700h3.500z" fill="#e8eef1" stroke="#444" />],
  ["Lupa", lens],
  ["Zoom de zona", <><path d="M3 7h8M3 7v9h13" fill="none" stroke="#1e6edc" strokeDasharray="2 1.5" /><g transform="translate(3 -1)">{lens}</g></>],
  ["Alerta en objeto", <><g transform="translate(-2 2)">{bell}</g><path d="M3 6h15M13 3l5 5M18 3l-5 5" stroke="#1e3cdc" /><path d="M15 8v8l2-2 2 3 1-1-1-3h2z" fill="#fff" stroke="#666" strokeWidth=".6" /></>],
  ["Alertas", <>{bell}<path d="M4 6L3 9M18 6l1 3" stroke="#555" /></>],
  ["Fibonacci extensión", <><path d="M2 13L5 6l3 6h4" fill="none" stroke="#111" strokeWidth="1.5" /><path d="M9 8h11" stroke="#e08060" strokeDasharray="2 1" /><path d="M10 12h6" stroke="#3c5adc" />{letter("F", 16, 17, "#0000e6")}</>],
  ["Fibonacci retroceso", <><path d="M6 7h14" stroke="#e08060" strokeDasharray="3 1" /><path d="M6 11h10" stroke="#3c5adc" strokeWidth="1.5" strokeDasharray="3 1" />{letter("F", 16, 17, "#0000e6")}</>],
  ["Fibonacci canal", <><path d="M6 4h13M6 7h13" stroke="#a5c864" strokeDasharray="3 1" strokeWidth="1.5" /><path d="M6 12h9" stroke="#c8dcf0" />{letter("F", 16, 17, "#0000e6")}</>],
  ["Rectángulo", <><rect x="5" y="7" width="13" height="8" fill="none" stroke="#6496ff" strokeWidth="1.3" />{cross(5, 15)}{cross(18, 7)}</>],
  ["Rectángulo rojo", <><rect x="5" y="7" width="13" height="8" fill="#d79aa0" stroke="#f01414" strokeWidth="1.5" />{cross(5, 15)}{cross(18, 7)}</>],
  ["Flecha", <><path d="M6 15l8-7" stroke="#000" strokeWidth="2" /><path d="M11 5h7v7z" fill="#000" /><circle cx="6" cy="15" r="1.5" fill="none" stroke="#000" /></>],
  ["Texto", <><path d="M4.500 4.500h13v9l-4 3.500h-9z" fill="#a8c6e4" stroke="#6496ff" />{letter("T", 8, 14, "#111")}</>],
  ["Comentario", <><path d="M11 4a7 6 0 1 1-1 12l-3 3v-4A7 6 0 0 1 11 4z" fill="#a8c6e4" stroke="#6496ff" />{letter("T", 8, 13, "#0a8214")}</>],
  ["Segmento", <><path d="M7 14l8-6" stroke="#111" strokeWidth="1.5" /><circle cx="6" cy="15" r="2" fill="none" stroke="#111" /><circle cx="16" cy="7" r="2" fill="none" stroke="#111" /></>],
  ["Semirrecta verde", ray("#28b428")],
  ["Semirrecta roja", ray("#f01414")],
  ["Regla", <><path d="M3 14L15 4l4 4L7 18z" fill="#b4c8d2" stroke="#4b5f69" /><path d="M6 12l2 2M9 9.500l2 2M12 7l2 2" stroke="#4b5f69" /></>],
  ["Canal", <><rect x="3" y="5" width="16" height="6" fill="#82b491" /><rect x="3" y="11" width="16" height="6" fill="#b4969b" /><path d="M3 15l4-6 3 3 4-6 5 6" fill="none" stroke="#96a0f0" strokeWidth="1.3" /></>],
  ["Elipse roja", ellipse("#f01e1e", "#c39aa3")],
  ["Elipse marrón", ellipse("#8c5a1e", "#a3a596")],
  ["Elipse verde", ellipse("#148c28", "#78a58c")],
  ["Elipse lima", ellipse("#28ff28", "#87c3a0")],
  ["Línea negra", diagonal("#111", 1)],
  ["Línea verde", diagonal("#28b428")],
  ["Línea roja", diagonal("#ff1414")],
  ["Horizontal negra", level("#111", 1)],
  ["Horizontal salmón", level("#f58c78")],
  ["Horizontal lima", level("#14f514")],
  ["Horizontal verde", level("#0a780a")],
  ["Horizontal roja", level("#f51414")],
  ["Horizontal celeste", level("#6496ff")],
  ["Horizontal azul", level("#0a0aa0")],
  ["Vertical", <path d="M11 2v18" stroke="#111" />],
  ["Ángulo", <><path d="M19 16H3L15 6" fill="none" stroke="#d26e78" strokeWidth="1.3" /><path d="M9 11q5 0 4 4" fill="none" stroke="#0000dc" strokeWidth="1.5" />{letter("α", 14, 11, "#0000dc")}</>],
  ["Ciclo", <><circle cx="10" cy="11" r="6" fill="none" stroke="#f08c50" strokeWidth="1.3" />{cross(10, 11)}{cross(16, 7)}</>],
  ["Ondas impulsivas", <><path d="M2 8l3 8 4-9 4 9 4-10" fill="none" stroke="#82aaff" />{cross(5, 14)}{cross(9, 8)}{cross(13, 15)}{cross(17, 5)}{cross(18, 12)}</>],
  ["Ondas correctivas", <><path d="M4 14l6-9 6 10" fill="none" stroke="#82aaff" strokeDasharray="3 2" />{cross(8, 11)}{cross(12, 5)}{letter("a", 2, 17, "#0000dc")}{letter("b", 15, 8, "#0000dc")}{letter("c", 12, 18, "#0000dc")}</>],
  ["Válido", <path d="M3 12l3-2 3 3 8-9 2 2-9 12z" fill="#3cd246" stroke="#1e823c" />],
  ["Me gusta", <path d="M3 10h4v8H3zM8 10l4-3V3c3 0 3 2 2 6h5v3l-2 6H8z" fill="#3cd246" stroke="#1e823c" />],
  ["No válido", <path d="M4 7l3-3 4 4 4-4 3 3-4 4 4 4-3 3-4-4-4 4-3-3 4-4z" fill="#f00a0a" stroke="#b40a0a" strokeWidth=".5" />],
  ["Aviso", <><path d="M11 3l8 14H3z" fill="#ffb432" stroke="#b46e14" strokeLinejoin="round" /><path d="M11 8v5M11 14.500v1.500" stroke="#5a3c0a" strokeWidth="1.8" /></>],
  ["Flecha verde", <path d="M11 5l5 6h-3v7H9v-7H6z" fill="#1e9628" />],
];

function Sidebar() {
  return (
    <nav className="flex w-[27px] shrink-0 flex-col border-r border-[#6f8893] bg-[#9cb9c6]" aria-label="Herramientas de dibujo">
      <button className="flex h-2 shrink-0 items-center justify-center border-b border-[#8099a4]" aria-label="Subir">
        <svg width="8" height="5" viewBox="0 0 8 5" fill="none" stroke="#5f7b88">
          <path d="M1 4l3-3 3 3" />
        </svg>
      </button>
      <div className="flex min-h-0 flex-1 flex-col overflow-hidden pt-1">
        {tools.map(([name, icon], k) => (
          <button
            key={name}
            aria-label={name}
            className={`ml-[2px] flex h-[22px] w-[22px] shrink-0 items-center justify-center ${
              k === 0 ? "rounded-sm border border-[#6f8893] bg-[#8ea5b0]" : ""
            }`}
          >
            <svg className="h-[22px] w-[22px]" viewBox="0 0 22 22">
              {icon}
            </svg>
          </button>
        ))}
      </div>
      <button className="flex h-3 shrink-0 items-center justify-center border-y border-[#6f8893] bg-[#b4d4e2]" aria-label="Bajar">
        <svg width="8" height="5" viewBox="0 0 8 5" fill="none" stroke="#222" strokeWidth="1.5">
          <path d="M1 1l3 3 3-3" />
        </svg>
      </button>
      <button className="flex h-7 shrink-0 items-center justify-center" aria-label="Ajustes">
        <svg width="22" height="24" viewBox="0 0 22 24">
          <path d="M5 5h9l3 3v11H5z" fill="#f0f5f7" stroke="#788c96" />
          <path d="M8 14l7-4" stroke="#c81e1e" />
          <path d="M11 12l3 3-1 3 3 3 3-1-2-6z" fill="#fff" stroke="#222" />
          <circle cx="6" cy="6" r="4.5" fill="#0f8c1e" />
          <text x="4" y="9" fill="#fff" fontSize="7" fontWeight="bold">4</text>
          <path d="M15 21h5l-2.500 3z" fill="#111" />
        </svg>
      </button>
      <button className="flex h-[26px] shrink-0 items-center justify-center" aria-label="Más">
        <svg width="18" height="12" viewBox="0 0 18 12" fill="#333">
          <circle cx="4" cy="3" r="1.7" />
          <circle cx="9" cy="3" r="1.7" />
          <circle cx="14" cy="3" r="1.7" />
          <path d="M11 7h5l-2.500 3z" />
        </svg>
      </button>
    </nav>
  );
}

const frames = [
  { text: "144s", width: "w-[26px]" },
  { text: "12m", width: "w-6" },
  { text: "56m", width: "w-6" },
  { text: "1h", width: "w-[17px]" },
  { text: "4h", width: "w-[17px]" },
  { text: "D", width: "w-[14px]" },
  { text: "W", width: "w-[14px]" },
  { text: "M", width: "w-[14px]" },
  { text: "Q", width: "w-[14px]" },
];
const sizes = [
  { text: "5kU", width: "w-6" },
  { text: "10kU", width: "w-[28px]" },
];

function FrameButton({ text, width, active }: { text: string; width: string; active: boolean }) {
  return (
    <button
      className={`flex h-4 items-center justify-center rounded-[3px] border border-[#5078aa] ${width} ${
        active ? "bg-[#879fc3]" : ""
      }`}
      aria-pressed={active}
    >
      {text}
    </button>
  );
}

const Chevron = () => (
  <svg width="7" height="5" viewBox="0 0 7 5" fill="none" stroke="#222" strokeWidth="1.3">
    <path d="M1 1l2.500 2.500L6 1" />
  </svg>
);

function TopBar() {
  const group = "flex h-full items-center border-r border-[#4f75a5]";
  return (
    <header className="flex h-[22px] shrink-0 items-center border-b-2 border-[#5878a0] bg-linear-to-b from-[#aed3ff] to-[#8eb5e4] text-[9px] font-bold whitespace-nowrap">
      <button className={`${group} w-[22px] justify-center`} aria-label="Gráfico">
        <svg width="14" height="16" viewBox="0 0 14 16" fill="#1e8c28" stroke="#1e8c28">
          <path d="M2.500 7v8M7 4v9M11.500 1v9" />
          <path d="M1 9h3v4H1zM5.500 6h3v5h-3zM10 3h3v5h-3z" />
        </svg>
      </button>
      <button className={`${group} w-4 justify-center`} aria-label="Vincular">
        <svg width="8" height="16" viewBox="0 0 8 16" fill="none" stroke="#5a6e82">
          <rect x="1" y="1" width="2.500" height="6" rx="1" />
          <rect x="4.500" y="1" width="2.500" height="6" rx="1" />
          <rect x="1" y="9" width="2.500" height="6" rx="1" />
          <rect x="4.500" y="9" width="2.500" height="6" rx="1" />
        </svg>
      </button>
      <button className={`${group} w-[61px] justify-between pr-[5px] pl-1`}>
        GBPUSD <Chevron />
      </button>
      <div className={`${group} w-[194px] justify-between px-1`}>
        {frames.map((f) => (
          <FrameButton key={f.text} {...f} active={f.text === "Q"} />
        ))}
      </div>
      <button className={`${group} w-[69px] justify-between pr-1 pl-[5px]`}>
        1 trimestre <Chevron />
      </button>
      <div className={`${group} w-[61px] justify-between px-[3px]`}>
        {sizes.map((s) => (
          <FrameButton key={s.text} {...s} active={s.text === "10kU"} />
        ))}
      </div>
      <button className={`${group} w-[84px] justify-between pr-[5px] pl-[5px]`}>
        10 k unidades <Chevron />
      </button>
      <button className={`${group} w-[85px] gap-1 pl-[5px]`}>
        <svg width="17" height="17" viewBox="0 0 17 17" fill="none">
          <path d="M1 9Q5 0 9 5t7-2" stroke="#28963c" strokeWidth="1.3" />
          <path d="M1 4q5-3 8 2t7 3" stroke="#c83c3c" strokeWidth="1.3" />
          <path d="M1 12h4v4H1zM11 12h5v4h-5z" fill="#14d214" />
          <path d="M5 14h3v2H5zM8 12h3v4H8z" fill="#e61414" />
        </svg>
        <span className="text-[10px]">Indicadores</span>
      </button>
      <button className={`${group} w-[13px] justify-center`} aria-label="Más indicadores">
        <Chevron />
      </button>
      <div className="flex items-center gap-1 pl-2">
        <span className="flex h-[11px] w-[11px] items-center justify-center border border-[#8c9baa] bg-[#dce4ea] text-[#8c8c8c]">
          i
        </span>
        <span className="mx-[3px] h-2 w-2 rounded-full bg-[#858c96]" />
        <span className="flex h-[14px] w-[38px] items-center justify-center rounded-[3px] border border-[#dc3c46] bg-[#fa5050] text-[10px] font-normal text-white">
          -0,68 %
        </span>
        <time dateTime="2025-07-11" className="w-12">
          11 jul 2025
        </time>
        <span className="flex h-[14px] w-12 items-center justify-center rounded-[3px] border border-[#3c96d2] bg-[#5abef5] text-[10px] font-normal">
          GBP/USD
        </span>
      </div>
      <button className="ml-auto flex h-full w-[22px] items-center justify-center border-x border-[#4f75a5]" aria-label="Actualizar">
        <svg width="16" height="16" viewBox="0 0 16 16" fill="none" strokeWidth="2">
          <path d="M9 2Q4 2 4 7" stroke="#f03c3c" />
          <path d="M0 7h8l-4 5z" fill="#f03c3c" />
          <path d="M7 14Q12 14 12 9" stroke="#14aa28" />
          <path d="M8 9h8l-4-5z" fill="#14aa28" />
        </svg>
      </button>
      <div className="flex h-full w-[43px] items-center justify-around">
        <button aria-label="Minimizar">
          <svg width="9" height="9" viewBox="0 0 9 9" stroke="#3c5f8c" strokeWidth="2">
            <path d="M1 7h7" />
          </svg>
        </button>
        <button aria-label="Restaurar">
          <svg width="9" height="9" viewBox="0 0 9 9" fill="none" stroke="#3c5f8c">
            <path d="M.5 3.500h5v5h-5zM3 3V.500h5.500V6H6" />
          </svg>
        </button>
        <button aria-label="Cerrar">
          <svg width="9" height="9" viewBox="0 0 9 9" stroke="#3c5f8c" strokeWidth="2">
            <path d="M1 1l7 7M8 1L1 8" />
          </svg>
        </button>
      </div>
    </header>
  );
}

const leftActions: [string, React.ReactNode][] = [
  ["Compartir", <><path d="M12 4L5 8l7 4" fill="none" stroke="#fff" strokeWidth="1.5" /><circle cx="12" cy="4" r="2" fill="#fff" /><circle cx="5" cy="8" r="2.3" fill="#fff" /><circle cx="12" cy="12" r="2" fill="#fff" /><path d="M11 13h5l-2.500 3z" fill="#111" /></>],
  ["Mensajes", <><rect x="1" y="2" width="10" height="8" rx="2" fill="#dce8ff" stroke="#5a82c8" /><path d="M5 6h8a2 2 0 0 1 2 2v4l-1 3-2-2H6a2 2 0 0 1-2-2z" fill="#3c78dc" /><path d="M6 10h7" stroke="#fff" strokeDasharray="1 1" /></>],
  ["Informe", <><rect x="3" y="2" width="11" height="13" fill="#fff" stroke="#555" /><path d="M5 5h6M5 8h3" stroke="#1e9628" strokeWidth="1.5" /><path d="M8 6l4 6" stroke="#dc1e1e" strokeWidth="1.5" /><path d="M5 12h6" stroke="#222" strokeWidth="1.5" /></>],
  ["Órdenes", <><path d="M2 3h8M2 7h9M2 11h8M2 14h9" stroke="#14b428" strokeWidth="2" /><path d="M7 5h8M6 9h9M8 12h7" stroke="#dc1e1e" strokeWidth="2" /></>],
  ["Ventanas", <><rect x="1" y="1" width="11" height="10" fill="#fff" stroke="#1e64c8" /><path d="M1 2.500h11" stroke="#1e64c8" strokeWidth="2" /><rect x="5" y="5" width="11" height="10" fill="#fff" stroke="#1e64c8" /><path d="M5 6.500h11" stroke="#1e64c8" strokeWidth="2" /><path d="M6 12l3-2 2 3 4-4" fill="none" stroke="#14a028" /></>],
];

const rightActions: [string, React.ReactNode][] = [
  ["Deshacer", <path d="M1 6l6-5v3c7 0 8 6 4 11 1-5-1-6-4-6v2z" fill="#1e6ee6" />],
  ["Rehacer", <path d="M15 6L9 1v3c-7 0-8 6-4 11-1-5 1-6 4-6v2z" fill="#78aad2" />],
  ["Configurar", <><path d="M9 2h6v12H9z" fill="#14b428" /><path d="M2 14l6-6-1-3 3-2v3l2 1h2l-2 3-3-1-5 6z" fill="#fff" stroke="#b41e1e" /></>],
  ["Ajustar zoom", <><circle cx="7" cy="6" r="4" fill="#a8c3d2" stroke="#788c96" /><path d="M10 9l4 5" stroke="#788c96" strokeWidth="2" /><path d="M14 2v6M2 14h7" stroke="#5082c8" strokeDasharray="2 1" /></>],
  ["Alejar", <><circle cx="6" cy="6" r="4.5" fill="#dcebf5" stroke="#333" /><path d="M4 6h4" stroke="#0000dc" strokeWidth="1.5" /><path d="M10 10l5 5" stroke="#111" strokeWidth="2.5" /></>],
  ["Acercar", <><circle cx="6" cy="6" r="4.5" fill="#dcebf5" stroke="#333" /><path d="M4 6h4M6 4v4" stroke="#0000dc" strokeWidth="1.5" /><path d="M10 10l5 5" stroke="#111" strokeWidth="2.5" /></>],
  ["Más vistas", <><path d="M1 5h14" stroke="#222" strokeWidth="3" strokeDasharray="3 1" /><path d="M8 8v6M5 11l3 3 3-3" fill="none" stroke="#1e5ac8" strokeWidth="1.5" /></>],
];

function BottomBar() {
  return (
    <footer className="flex h-5 shrink-0 items-center bg-[#9cb9c6]">
      <button className="flex h-full w-[27px] items-center justify-center border-t border-r border-[#6f8893] bg-[#8a9ea8]" aria-label="Dibujar">
        <svg width="18" height="17" viewBox="0 0 18 17" fill="none">
          <path d="M1 14l3-10 3 10 2-8" stroke="#222" />
          <path d="M2 2l8 12" stroke="#dc1e1e" strokeWidth="1.3" />
          <path d="M8 15l1-4 6-8 2.500 2-6 8z" fill="#ffdc3c" stroke="#8c6414" strokeWidth=".7" />
        </svg>
      </button>
      <div className="flex w-[105px] justify-around">
        {leftActions.map(([name, icon]) => (
          <button key={name} aria-label={name}>
            <svg width="17" height="17" viewBox="0 0 17 17">
              {icon}
            </svg>
          </button>
        ))}
      </div>
      <button className="w-[14px] text-[13px] leading-3 text-[#3c5560]" aria-label="Ocultar">
        «
      </button>
      <div className="flex h-[14px] min-w-0 flex-1 items-stretch justify-between rounded-sm border border-[#6f8893]">
        <button className="flex w-3 items-center justify-center rounded-sm border-r border-[#6f8893] bg-[#c0d8e2]" aria-label="Desplazar a la izquierda">
          <svg width="4" height="6" viewBox="0 0 4 6" fill="none" stroke="#111" strokeWidth="1.3">
            <path d="M3 1L1 3l2 2" />
          </svg>
        </button>
        <button className="flex w-3 items-center justify-center rounded-sm border-l border-[#6f8893] bg-[#c0d8e2]" aria-label="Desplazar a la derecha">
          <svg width="4" height="6" viewBox="0 0 4 6" fill="none" stroke="#111" strokeWidth="1.3">
            <path d="M1 1l2 2-2 2" />
          </svg>
        </button>
      </div>
      <div className="flex w-[149px] shrink-0 justify-between pl-[5px]">
        {rightActions.map(([name, icon]) => (
          <button key={name} aria-label={name}>
            <svg width="16" height="16" viewBox="0 0 16 16">
              {icon}
            </svg>
          </button>
        ))}
      </div>
    </footer>
  );
}

export default function App() {
  return (
    <div className="flex h-screen flex-col overflow-hidden bg-white font-['Liberation_Sans',Arial,sans-serif] text-black">
      <TopBar />
      <div className="flex min-h-0 flex-1">
        <Sidebar />
        <main className="flex min-w-0 flex-1 flex-col">
          <PricePane />
          <TrainsPane />
          <WillyPane />
          <AwesomePane />
          <ForcePane />
          <TimeAxis />
        </main>
      </div>
      <BottomBar />
    </div>
  );
}
